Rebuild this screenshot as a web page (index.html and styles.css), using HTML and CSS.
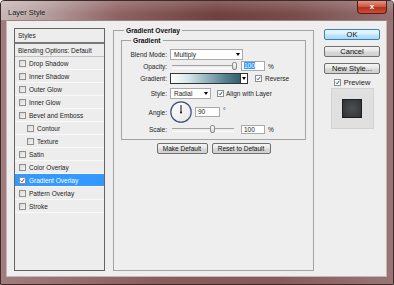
FILE: index.html
```html
<!DOCTYPE html>
<html>
<head>
<title>Layer Style</title>
<link rel="stylesheet" href="styles.css">
</head>
<body>
<div class="window">
  <div class="titlebar">
    <span class="title">Layer Style</span>
    <span class="close">x</span>
  </div>
  <div class="frame">
    <div class="client">

      <ul class="styles">
        <li class="head">Styles</li>
        <li class="blend">Blending Options: Default</li>
        <li><span class="cb"></span>Drop Shadow</li>
        <li><span class="cb"></span>Inner Shadow</li>
        <li><span class="cb"></span>Outer Glow</li>
        <li><span class="cb"></span>Inner Glow</li>
        <li><span class="cb"></span>Bevel and Emboss</li>
        <li class="sub"><span class="cb"></span>Contour</li>
        <li class="sub"><span class="cb"></span>Texture</li>
        <li><span class="cb"></span>Satin</li>
        <li><span class="cb"></span>Color Overlay</li>
        <li class="sel"><span class="cb on"><svg viewBox="0 0 7 7"><path d="M1.2 3.6 L2.9 5.4 L6 1.1"/></svg></span>Gradient Overlay</li>
        <li><span class="cb"></span>Pattern Overlay</li>
        <li><span class="cb"></span>Stroke</li>
      </ul>

      <fieldset class="group outer">
        <legend>Gradient Overlay</legend>
        <fieldset class="group inner">
          <legend>Gradient</legend>

          <div class="row">
            <span class="lbl">Blend Mode:</span>
            <div class="select w-blend">Multiply<i class="caret"></i></div>
          </div>

          <div class="row">
            <span class="lbl">Opacity:</span>
            <div class="slider"><span class="thumb" style="left: 64px"></span></div>
            <div class="num gap-num"><span class="hl">100</span></div>
            <span class="unit">%</span>
          </div>

          <div class="row row-grad">
            <span class="lbl">Gradient:</span>
            <div class="grad">
              <div class="grad-fill"></div>
              <div class="grad-drop"><i class="caret"></i></div>
            </div>
            <span class="check reverse"><span class="cb on"><svg viewBox="0 0 7 7"><path d="M1.2 3.6 L2.9 5.4 L6 1.1"/></svg></span>Reverse</span>
          </div>

          <div class="row row-style">
            <span class="lbl">Style:</span>
            <div class="select w-style">Radial<i class="caret"></i></div>
            <span class="check align"><span class="cb on"><svg viewBox="0 0 7 7"><path d="M1.2 3.6 L2.9 5.4 L6 1.1"/></svg></span>Align with Layer</span>
          </div>

          <div class="row row-angle">
            <span class="lbl">Angle:</span>
            <svg class="dial" width="22" height="22" viewBox="0 0 22 22">
              <defs>
                <linearGradient id="dialfill" x1="0" y1="0" x2="1" y2="1">
                  <stop offset="0" stop-color="#ffffff"/>
                  <stop offset="1" stop-color="#e6e6e6"/>
                </linearGradient>
              </defs>
              <circle cx="11" cy="11" r="10.2" fill="url(#dialfill)" stroke="#3d4f7c" stroke-width="1.2"/>
              <line x1="11" y1="11.5" x2="11" y2="4" stroke="#111" stroke-width="1"/>
              <circle cx="11" cy="11.5" r="1" fill="#111"/>
            </svg>
            <div class="num w-angle">90</div>
            <span class="deg">°</span>
          </div>

          <div class="row">
            <span class="lbl">Scale:</span>
            <div class="slider"><span class="thumb" style="left: 42px"></span></div>
            <div class="num gap-num scale">100</div>
            <span class="unit">%</span>
          </div>
        </fieldset>

        <div class="defaults">
          <button class="btn w-make">Make Default</button>
          <button class="btn w-reset">Reset to Default</button>
        </div>
      </fieldset>

      <div class="side">
        <button class="btn side-btn ok">OK</button>
        <button class="btn side-btn">Cancel</button>
        <button class="btn side-btn new">New Style...</button>
        <span class="check preview"><span class="cb on"><svg viewBox="0 0 7 7"><path d="M1.2 3.6 L2.9 5.4 L6 1.1"/></svg></span>Preview</span>
        <div class="thumbbox"><div class="swatch"></div></div>
      </div>

    </div>
  </div>
</div>
</body>
</html>
```

FILE: styles.css
```css
* {
  box-sizing: border-box;
}

body {
  margin: 0;
  font-family: "Liberation Sans", Arial, sans-serif;
  font-size: 6.5px;
  color: #1c1c1c;
}

/* window chrome */
.window {
  width: 394px;
  height: 285px;
  display: flex;
  flex-direction: column;
  border: 1px solid #3f2a2a;
  border-radius: 4px 4px 0 0;
  background: linear-gradient(90deg, #a07e7e, #8a5d5d 40%, #865a5a 70%, #987676);
  overflow: hidden;
}

.titlebar {
  height: 19px;
  flex: none;
  display: flex;
  justify-content: space-between;
  align-items: flex-start;
  background:
    linear-gradient(180deg, rgba(255,255,255,0.18), rgba(255,255,255,0) 70%),
    linear-gradient(90deg, #c9b7b7 0%, #b49b9b 12%, #8e6161 30%, #703f3f 55%, #7a4b4b 75%, #957272 100%);
}

.title {
  margin: 7px 0 0 7px;
  font-size: 7.5px;
  color: #161616;
  text-shadow: 0 0 3px rgba(255,255,255,0.5);
}

.close {
  width: 30px;
  height: 13px;
  margin-right: 6px;
  border: 1px solid #5e1a12;
  border-top: none;
  border-radius: 0 0 4px 4px;
  background: linear-gradient(180deg, #e09586, #cf5a44 45%, #b7301b 55%, #c8503a);
  color: #fff;
  font-weight: bold;
  font-size: 8px;
  line-height: 11px;
  text-align: center;
}

.frame {
  flex: 1;
  padding: 0 6px 7px 5px;
}

.client {
  height: 257px;
  display: flex;
  align-items: flex-start;
  padding: 5px 0 0 7px;
  border: 1px solid #c8b6b6;
  border-top-color: #9b8080;
  background: #eeeeee;
}

/* styles list */
.styles {
  list-style: none;
  margin: 2px 0 0;
  padding: 0;
  width: 91px;
  height: 243px;
  flex: none;
  border: 1px solid #646464;
  background: #ededed;
}

.styles li {
  height: 13px;
  display: flex;
  align-items: center;
  gap: 3px;
  padding-left: 4px;
  border-bottom: 1px solid #f9f9f9;
  white-space: nowrap;
}

.styles li.head {
  height: 15px;
  padding-left: 3px;
  border-bottom: 2px solid #7a7a7a;
}

.styles li.blend {
  padding-left: 3px;
  border-bottom-color: #c2c2c2;
}

.styles li.sub {
  padding-left: 12px;
}

.styles li.sel {
  background: #3399ff;
  color: #fff;
}

.cb {
  width: 7px;
  height: 7px;
  flex: none;
  display: inline-flex;
  border: 1px solid #8e8e8e;
  background: linear-gradient(135deg, #d8d8d8, #f6f6f6);
}

.cb.on {
  background: #fff;
}

.cb svg {
  width: 100%;
  height: 100%;
  fill: none;
  stroke: #22409a;
  stroke-width: 1.3;
}

/* group boxes */
.group {
  margin: 0;
  min-width: 0;
  border: 1px solid #a3a3a3;
}

.group legend {
  padding: 0 2px;
  font-size: 6.7px;
  font-weight: bold;
  line-height: 9px;
  color: #111;
}

.outer {
  width: 201px;
  height: 245px;
  margin-left: 8px;
  flex: none;
  padding: 1px 7px 0;
}

.outer > legend {
  margin-left: 3px;
}

.inner {
  height: 104px;
  padding: 3px 0 4px;
}

.inner > legend {
  margin-left: 9px;
}

.row {
  height: 12px;
  display: flex;
  align-items: center;
}

.row-grad {
  height: 13px;
}

.row-style {
  height: 16px;
}

.row-angle {
  height: 22px;
}

.lbl {
  width: 45px;
  margin-right: 3px;
  text-align: right;
}

.select {
  height: 11px;
  display: flex;
  align-items: center;
  padding-left: 3px;
  border: 1px solid #a9a9a9;
  background: #fff;
}

.w-blend {
  width: 73px;
}

.w-style {
  width: 41px;
}

.caret {
  margin-left: auto;
  margin-right: 2px;
  border-left: 2.5px solid transparent;
  border-right: 2.5px solid transparent;
  border-top: 3px solid #000;
}

.slider {
  width: 66px;
  height: 10px;
  position: relative;
}

.slider::before {
  content: "";
  position: absolute;
  left: 2px;
  right: 2px;
  top: 4px;
  height: 2px;
  border-top: 1px solid #a2a2a2;
  border-bottom: 1px solid #fff;
}

.thumb {
  position: absolute;
  top: 1px;
  width: 5px;
  height: 8px;
  margin-left: -2px;
  border: 1px solid #8c8c8c;
  border-radius: 2px;
  background: linear-gradient(#ffffff, #d4d4d4);
}

.num {
  height: 10px;
  width: 24px;
  padding-left: 2px;
  border: 1px solid #a9a9a9;
  background: #fff;
  line-height: 8px;
}

.num.scale {
  height: 9px;
  line-height: 7px;
}

.gap-num {
  margin-left: 5px;
}

.hl {
  background: #3399ff;
  color: #fff;
}

.unit {
  margin-left: 3px;
}

.grad {
  width: 78px;
  height: 11px;
  display: flex;
  border: 1px solid #333;
}

.grad-fill {
  flex: 1;
  background: linear-gradient(90deg, #ffffff 0%, #d6e6e9 25%, #8db0b8 55%, #52808c 80%, #375f6c 100%);
}

.grad-drop {
  width: 7px;
  display: flex;
  align-items: center;
  border-left: 1px solid #333;
  background: #fff;
}

.grad-drop .caret {
  margin: 0 auto;
  border-left-width: 2px;
  border-right-width: 2px;
}

.check {
  display: flex;
  align-items: center;
  gap: 3px;
}

.reverse {
  margin-left: 7px;
}

.align {
  margin-left: 6px;
  gap: 2px;
}

.dial {
  flex: none;
}

.w-angle {
  width: 25px;
  margin-left: 3px;
}

.deg {
  margin-left: 3px;
  align-self: flex-start;
  margin-top: 6px;
}

/* buttons */
.btn {
  height: 11px;
  padding: 0;
  border: 1px solid #707070;
  border-radius: 2px;
  background: linear-gradient(180deg, #f4f4f4, #e6e6e6 48%, #d8d8d8 52%, #cfcfcf);
  font-family: inherit;
  font-size: 6.5px;
  color: #111;
}

.defaults {
  display: flex;
  justify-content: center;
  gap: 4px;
  margin-top: 3px;
}

.w-make {
  width: 51px;
}

.w-reset {
  width: 59px;
}

.side {
  width: 56px;
  flex: none;
  margin: 3px 0 0 10px;
  display: flex;
  flex-direction: column;
  align-items: center;
}

.side-btn {
  width: 56px;
  font-size: 7.5px;
  margin-bottom: 6px;
}

.side-btn.ok {
  border-color: #3c7fb1;
  background: linear-gradient(180deg, #eaf6fd, #d9f0fc 48%, #bee6fd 52%, #a7d9f5);
}

.side-btn.new {
  margin-bottom: 4px;
}

.preview {
  height: 9px;
  font-size: 7.5px;
}

.thumbbox {
  width: 43px;
  height: 41px;
  margin-top: 1px;
  display: flex;
  align-items: center;
  justify-content: center;
  border: 1px solid #d2d2d2;
  background: #e0e0e0;
}

.swatch {
  width: 20px;
  height: 19px;
  border: 1px solid #1e1e1e;
  background: radial-gradient(circle, #4c5052, #303335);
}
```
